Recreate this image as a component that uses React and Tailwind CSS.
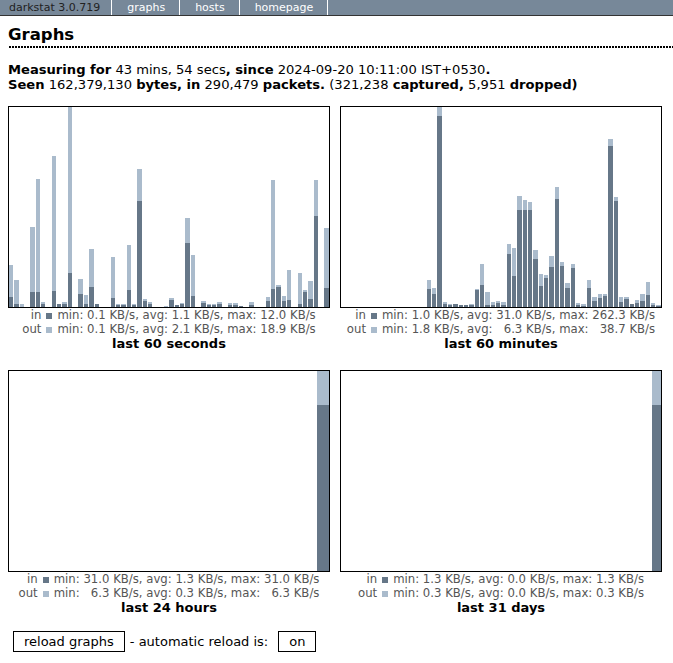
import React from 'react';

// [total height, in height] per bar, in px of a 200px tall graph
const secs = [
  [42, 10], [27, 3], [3, 0], [0, 0], [80, 15], [128, 15], [5, 3], [0, 0], [151, 16], [3.3, 2.7],
  [4.7, 2.7], [200, 34], [0, 0], [28, 13], [12, 3], [58, 20], [3, 2.7], [0, 0], [0, 0], [50, 9],
  [2.7, 2.3], [2.7, 2], [62, 17], [2.7, 2.3], [138, 106], [8, 6], [4.7, 2.7], [0, 0], [0, 0], [1.3, 0],
  [9, 7], [2.3, 1.7], [4.3, 2.7], [89, 64], [52, 11], [0, 0], [6, 4], [2.7, 2], [2.7, 2], [5, 3],
  [0, 0], [4.3, 2.3], [4.3, 2.3], [1.3, 1.3], [0, 0], [5, 2.3], [0, 0], [0, 0], [10, 6], [127, 18],
  [22, 20], [11, 6], [37, 7], [0, 0], [34, 3], [17, 15], [26, 8], [127, 91], [0, 0], [79, 19],
];

const mins = [
  ...Array(16).fill([0, 0]),
  [27, 18], [19, 13], [200, 191], [4.7, 2.7], [2.7, 2], [3.3, 2.7], [2.3, 1.7], [2.3, 1.7], [3.3, 2], [18, 17],
  [43, 22], [15, 2.3], [4.7, 1.7], [6, 4], [4.7, 1.7], [63, 53], [59, 31], [111, 97], [107, 97], [105, 97],
  [57, 48], [33, 21], [32, 29], [51, 40], [120, 108], [45, 41], [24, 19], [43, 39], [4.3, 2.3], [3.3, 1.3],
  [27, 19], [10, 6], [13, 9], [13, 11], [168, 161], [110, 106], [10, 5], [10, 8], [3.3, 2.7], [7, 4],
  [13, 6], [25, 12], [4.3, 2.3], [2.3, 1.3],
];

const hours = [...Array(23).fill([0, 0]), [200, 166]];
const days = [...Array(30).fill([0, 0]), [200, 166]];

const graphs = [
  [
    {
      title: 'last 60 seconds', bars: secs,
      inText: 'min: 0.1 KB/s, avg: 1.1 KB/s, max: 12.0 KB/s',
      outText: 'min: 0.1 KB/s, avg: 2.1 KB/s, max: 18.9 KB/s',
    },
    {
      title: 'last 60 minutes', bars: mins,
      inText: 'min: 1.0 KB/s, avg: 31.0 KB/s, max: 262.3 KB/s',
      outText: 'min: 1.8 KB/s, avg:   6.3 KB/s, max:   38.7 KB/s',
    },
  ],
  [
    {
      title: 'last 24 hours', bars: hours,
      inText: 'min: 31.0 KB/s, avg: 1.3 KB/s, max: 31.0 KB/s',
      outText: 'min:   6.3 KB/s, avg: 0.3 KB/s, max:   6.3 KB/s',
    },
    {
      title: 'last 31 days', bars: days,
      inText: 'min: 1.3 KB/s, avg: 0.0 KB/s, max: 1.3 KB/s',
      outText: 'min: 0.3 KB/s, avg: 0.0 KB/s, max: 0.3 KB/s',
    },
  ],
];

function Graph({ title, bars, inText, outText }) {
  return (
    <div className="flex flex-col items-center w-[322px]">
      <div className="w-[322px] h-[202px] border border-black bg-white flex items-end gap-px">
        {bars.map(([total, inH], i) => (
          <div key={i} className="flex-1 flex flex-col justify-end">
            <div className="bg-[#aabbcc]" style={{ height: Math.max(total - inH, 0) }} />
            <div className="bg-[#667788]" style={{ height: inH }} />
          </div>
        ))}
      </div>
      <div className="grid grid-cols-[auto_auto] text-[11.7px] leading-[14px] text-[#555]">
        <span className="text-right">in</span>
        <span className="whitespace-pre">
          <span className="inline-block w-[6px] h-[6px] ml-[5px] mr-[5px] bg-[#667788]" />
          {inText}
        </span>
        <span className="text-right">out</span>
        <span className="whitespace-pre">
          <span className="inline-block w-[6px] h-[6px] ml-[5px] mr-[5px] bg-[#aabbcc]" />
          {outText}
        </span>
      </div>
      <div className="text-[13px] leading-[15px] font-bold text-black">{title}</div>
    </div>
  );
}

export default function App() {
  return (
    <div className="min-h-screen bg-white text-black font-['DejaVu_Sans',sans-serif]">
      {/* Menu */}
      <div className="flex h-[16px] bg-[#778899] border-b border-[#333] text-[11px] leading-[15px]">
        <span className="pl-[9px] pr-[11px] text-[#222] border-r border-white">darkstat 3.0.719</span>
        <span className="pl-[15px] pr-[14px] text-white border-r border-white">graphs</span>
        <span className="pl-[15px] pr-[14px] text-white border-r border-white">hosts</span>
        <span className="pl-[15px] pr-[14px] text-white border-r border-white">homepage</span>
      </div>

      <div className="pl-[8px]">
        <h1 className="mt-[9px] text-[16.5px] leading-[20px] font-bold pb-[3px] bg-[linear-gradient(to_right,#000_2px,transparent_2px)] bg-[length:3px_2px] bg-repeat-x bg-bottom">
          Graphs
        </h1>

        <p className="mt-[14px] text-[13.1px] leading-[15px]">
          <b>Measuring for</b> 43 mins, 54 secs<b>, since</b> 2024-09-20 10:11:00 IST+0530<b>.</b>
          <br />
          <b>Seen</b> 162,379,130 <b>bytes, in</b> 290,479 <b>packets.</b> (321,238 <b>captured,</b> 5,951 <b>dropped)</b>
        </p>

        <div className="mt-[14px] flex flex-col gap-[19px]">
          {graphs.map((row, r) => (
            <div key={r} className="flex gap-[10px]">
              {row.map((g) => (
                <Graph key={g.title} {...g} />
              ))}
            </div>
          ))}
        </div>

        <div className="mt-[16px] flex items-center text-[13px] leading-[15px]">
          <button className="ml-[5px] border border-black bg-white px-[10px] py-[2px] leading-[15px]">reload graphs</button>
          <span className="ml-[5px]">- automatic reload is:</span>
          <button className="ml-[10px] border border-black bg-white px-[10px] py-[2px] leading-[15px]">on</button>
        </div>
      </div>
    </div>
  );
}
